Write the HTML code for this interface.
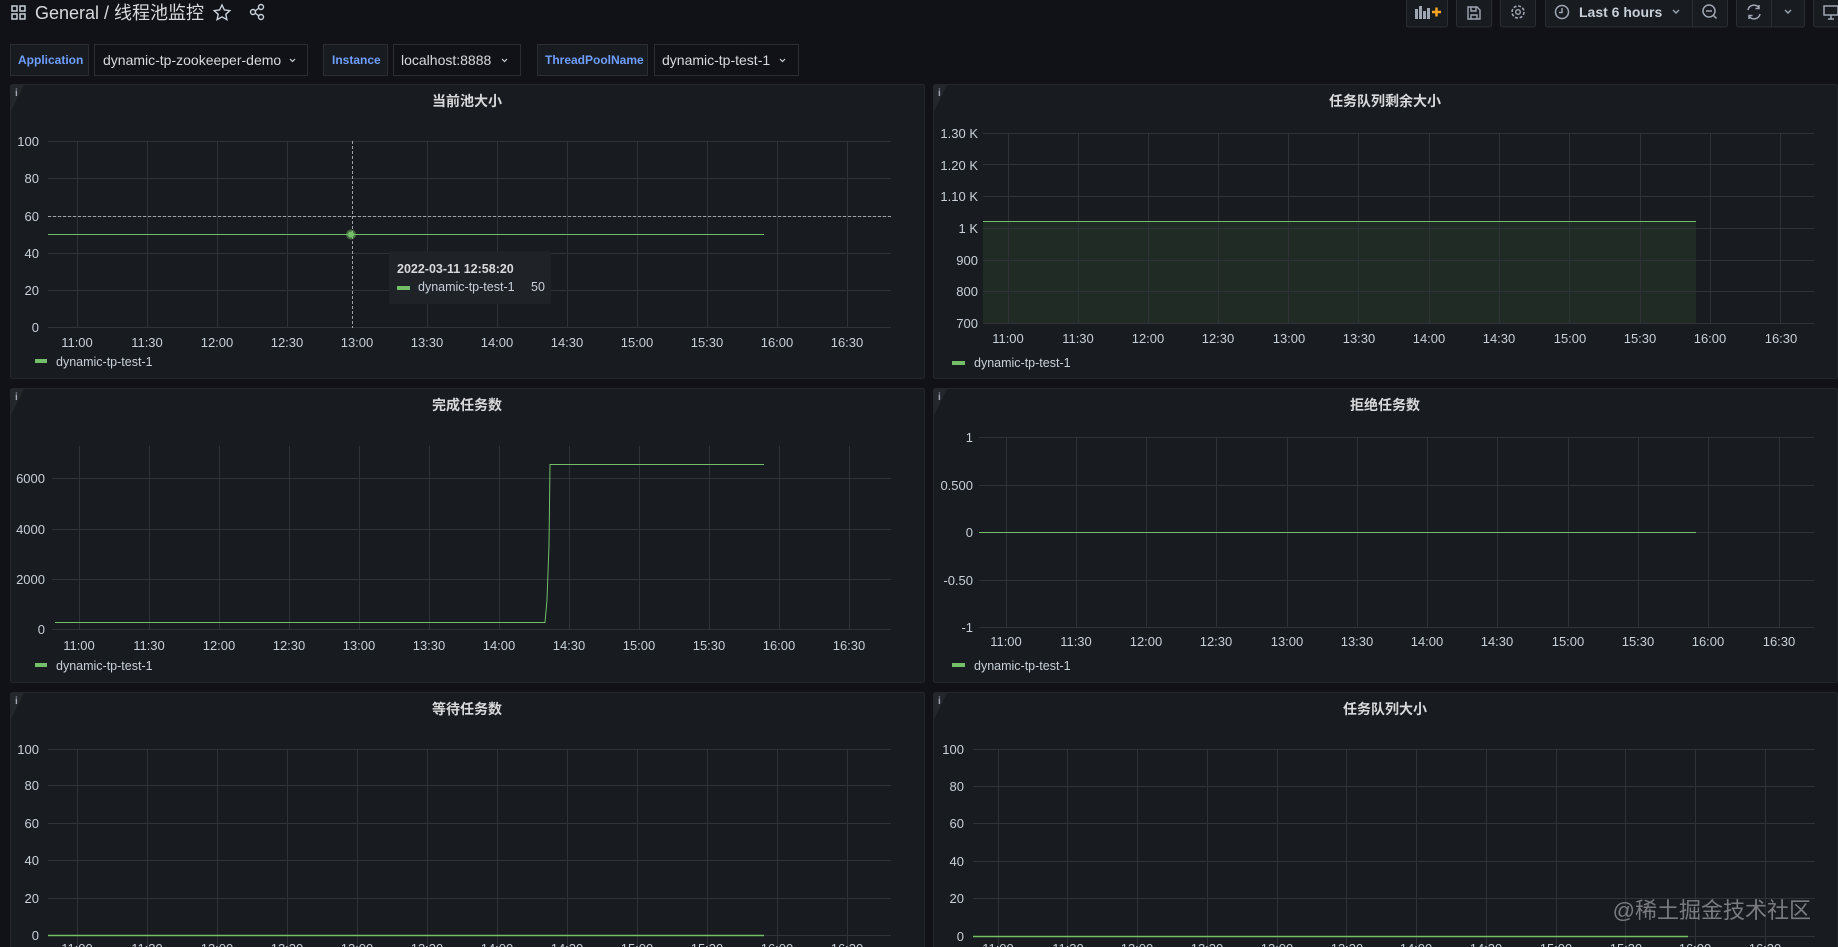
<!DOCTYPE html>
<html><head><meta charset="utf-8"><style>
html,body{margin:0;padding:0;background:#111217;width:1838px;height:947px;overflow:hidden}
svg{display:block}
text{font-family:"Liberation Sans","Noto Sans CJK SC",sans-serif}
.ax{fill:#c7d0d9;font-size:13px}
.tt{fill:#d8d9da;font-size:14px;font-weight:bold;text-anchor:middle}
.g{stroke:#2f3237;stroke-width:1;fill:none}
.lg{fill:#c7d0d9;font-size:12.5px}
.pn{fill:#181b1f;stroke:#23262b}
.btn{fill:#181b1f;stroke:#2a2d33}
</style></head><body>
<svg width="1838" height="947" viewBox="0 0 1838 947" xmlns="http://www.w3.org/2000/svg">
<g fill="none" stroke="#c7d0d9" stroke-width="1.5">
<rect x="12" y="6" width="5" height="5"/><rect x="20" y="6" width="5" height="5"/><rect x="12" y="14" width="5" height="5"/><rect x="20" y="14" width="5" height="5"/>
</g>
<text x="35" y="19" fill="#d8d9da" font-size="18">General</text>
<text x="104" y="19" fill="#d8d9da" font-size="18">/ 线程池监控</text>
<path d="M222 5 l2.4 5 5.4 .6 -4 3.7 1.1 5.3 -4.9-2.7 -4.9 2.7 1.1-5.3 -4-3.7 5.4-.6z" fill="none" stroke="#c7d0d9" stroke-width="1.4"/>
<g fill="none" stroke="#c7d0d9" stroke-width="1.4"><circle cx="253" cy="12" r="2.5"/><circle cx="261" cy="7" r="2.5"/><circle cx="261" cy="17" r="2.5"/><path d="M255 11l4-3M255 13l4 3"/></g>
<rect class="btn" x="1406.5" y="-2" width="41" height="29" rx="2"/>
<g fill="#9fa7b3"><rect x="1415" y="9" width="3" height="10"/><rect x="1419" y="6" width="3" height="13"/><rect x="1423" y="11" width="3" height="8"/><rect x="1427" y="8" width="3" height="11"/></g>
<path d="M1432 12h9M1436.5 7.5v9" stroke="#f5a623" stroke-width="2.5"/>
<rect class="btn" x="1456.5" y="-2" width="35" height="29" rx="2"/>
<path d="M1468 7h9l3 3v9h-12z M1471 7v4h5v-4 M1471 19v-4h6v4" fill="none" stroke="#9fa7b3" stroke-width="1.4"/>
<rect class="btn" x="1500.5" y="-2" width="35" height="29" rx="2"/>
<circle cx="1518" cy="12" r="6" fill="none" stroke="#9fa7b3" stroke-width="1.6" stroke-dasharray="3 1.7"/><circle cx="1518" cy="12" r="2.3" fill="none" stroke="#9fa7b3" stroke-width="1.4"/>
<rect class="btn" x="1545.5" y="-2" width="182" height="29" rx="2"/>
<line x1="1692.5" y1="0" x2="1692.5" y2="27" stroke="#2a2d33"/>
<circle cx="1562" cy="12" r="6.5" fill="none" stroke="#9fa7b3" stroke-width="1.5"/><path d="M1562 8v4.5h-3" fill="none" stroke="#9fa7b3" stroke-width="1.4"/>
<text x="1579" y="17" fill="#c7d0d9" font-size="14" font-weight="bold">Last 6 hours</text>
<path d="M1673 10l3 3 3-3" fill="none" stroke="#9fa7b3" stroke-width="1.4"/>
<circle cx="1709" cy="11" r="6" fill="none" stroke="#9fa7b3" stroke-width="1.5"/><path d="M1706 11h6M1713.5 15.5l3 3" stroke="#9fa7b3" stroke-width="1.5"/>
<rect class="btn" x="1736.5" y="-2" width="68" height="29" rx="2"/>
<line x1="1771.5" y1="0" x2="1771.5" y2="27" stroke="#2a2d33"/>
<path d="M1748 10a6 6 0 0 1 11-2M1760 14a6 6 0 0 1-11 2M1759 5v3.5h-3.5M1749 19v-3.5h3.5" fill="none" stroke="#9fa7b3" stroke-width="1.5"/>
<path d="M1785 10l3 3 3-3" fill="none" stroke="#9fa7b3" stroke-width="1.4"/>
<rect class="btn" x="1813.5" y="-2" width="40" height="29" rx="2"/>
<path d="M1824 6h14v9h-14z M1828 19h6 M1831 15v4" fill="none" stroke="#9fa7b3" stroke-width="1.5"/>

<g font-size="12" font-weight="bold" fill="#6e9fff">
<rect x="10.5" y="44.5" width="78" height="31" fill="#181b1f" stroke="#2a2d33"/><text x="18" y="64">Application</text>
<rect x="323.5" y="44.5" width="64" height="31" fill="#181b1f" stroke="#2a2d33"/><text x="332" y="64">Instance</text>
<rect x="537.5" y="44.5" width="110" height="31" fill="#181b1f" stroke="#2a2d33"/><text x="545" y="64">ThreadPoolName</text>
</g>
<g font-size="14" fill="#d8d9da">
<rect x="94.5" y="44.5" width="213" height="31" fill="#111217" stroke="#2a2d33"/><text x="103" y="65">dynamic-tp-zookeeper-demo</text>
<rect x="393.5" y="44.5" width="127" height="31" fill="#111217" stroke="#2a2d33"/><text x="401" y="65">localhost:8888</text>
<rect x="654.5" y="44.5" width="144" height="31" fill="#111217" stroke="#2a2d33"/><text x="662" y="65">dynamic-tp-test-1</text>
</g>
<g fill="none" stroke="#c7d0d9" stroke-width="1.2"><path d="M290 59l2.5 2.5 2.5-2.5"/><path d="M502 59l2.5 2.5 2.5-2.5"/><path d="M780 59l2.5 2.5 2.5-2.5"/></g>

<rect class="pn" x="10.5" y="84.5" width="914" height="294" rx="2"/>
<rect class="pn" x="933.5" y="84.5" width="904" height="294" rx="2"/>
<rect class="pn" x="10.5" y="388.5" width="914" height="294" rx="2"/>
<rect class="pn" x="933.5" y="388.5" width="904" height="294" rx="2"/>
<rect class="pn" x="10.5" y="692.5" width="914" height="270" rx="2"/>
<rect class="pn" x="933.5" y="692.5" width="904" height="270" rx="2"/>
<g fill="#24272c"><path d="M11 85h13l-13 26z"/><path d="M934 85h13l-13 26z"/><path d="M11 389h13l-13 26z"/><path d="M934 389h13l-13 26z"/><path d="M11 693h13l-13 26z"/><path d="M934 693h13l-13 26z"/></g>
<g fill="#9fa7b3" font-size="10" font-weight="bold" font-family="Liberation Serif"><text x="15" y="96">i</text><text x="938" y="96">i</text><text x="15" y="400">i</text><text x="938" y="400">i</text><text x="15" y="704">i</text><text x="938" y="704">i</text></g>

<text class="tt" x="467" y="106">当前池大小</text>
<text class="tt" x="1385" y="106">任务队列剩余大小</text>
<text class="tt" x="467" y="410">完成任务数</text>
<text class="tt" x="1385" y="410">拒绝任务数</text>
<text class="tt" x="467" y="714">等待任务数</text>
<text class="tt" x="1385" y="714">任务队列大小</text>

<path class="g" d="M48 141.5H891M48 178.5H891M48 216.5H891M48 253.5H891M48 290.5H891M48 327.5H891M77.5 141V328M147.5 141V328M217.5 141V328M287.5 141V328M427.5 141V328M497.5 141V328M567.5 141V328M637.5 141V328M707.5 141V328M777.5 141V328M847.5 141V328"/>
<g class="ax" text-anchor="end"><text x="39" y="146">100</text><text x="39" y="183">80</text><text x="39" y="221">60</text><text x="39" y="258">40</text><text x="39" y="295">20</text><text x="39" y="332">0</text></g>
<g class="ax" text-anchor="middle"><text x="77" y="347">11:00</text><text x="147" y="347">11:30</text><text x="217" y="347">12:00</text><text x="287" y="347">12:30</text><text x="357" y="347">13:00</text><text x="427" y="347">13:30</text><text x="497" y="347">14:00</text><text x="567" y="347">14:30</text><text x="637" y="347">15:00</text><text x="707" y="347">15:30</text><text x="777" y="347">16:00</text><text x="847" y="347">16:30</text></g>
<path d="M48 216.5H891M352.5 141V328" stroke="#a0a4aa" stroke-dasharray="3 2" stroke-width="1"/>
<path d="M48 234.5H764" stroke="#73bf69" stroke-width="1"/>
<circle cx="351" cy="234.5" r="5" fill="#73bf69" opacity=".5"/><circle cx="351" cy="234.5" r="3" fill="#73bf69"/>
<rect x="389" y="251" width="162" height="53" fill="#1f2227" rx="2"/>
<text x="397" y="273" fill="#d8d9da" font-size="12.5" font-weight="bold">2022-03-11 12:58:20</text>
<rect x="397" y="286" width="13" height="4" fill="#73bf69"/>
<text x="418" y="291" fill="#c7d0d9" font-size="12.5">dynamic-tp-test-1</text><text x="531" y="291" fill="#c7d0d9" font-size="12.5">50</text>
<rect x="35" y="359" width="12" height="4" fill="#73bf69"/><text class="lg" x="56" y="366">dynamic-tp-test-1</text>

<rect x="983" y="221" width="713" height="102" fill="#73bf69" opacity=".1"/>
<path class="g" d="M983 133.5H1814M983 164.5H1814M983 196.5H1814M983 228.5H1814M983 260.5H1814M983 291.5H1814M983 323.5H1814M1008.5 133V324M1078.5 133V324M1148.5 133V324M1218.5 133V324M1288.5 133V324M1358.5 133V324M1429.5 133V324M1499.5 133V324M1569.5 133V324M1640.5 133V324M1710.5 133V324M1780.5 133V324"/>
<path d="M983 221.5H1696" stroke="#73bf69"/>
<g class="ax" text-anchor="end"><text x="978" y="138">1.30 K</text><text x="978" y="170">1.20 K</text><text x="978" y="201">1.10 K</text><text x="978" y="233">1 K</text><text x="978" y="265">900</text><text x="978" y="296">800</text><text x="978" y="328">700</text></g>
<g class="ax" text-anchor="middle"><text x="1008" y="343">11:00</text><text x="1078" y="343">11:30</text><text x="1148" y="343">12:00</text><text x="1218" y="343">12:30</text><text x="1289" y="343">13:00</text><text x="1359" y="343">13:30</text><text x="1429" y="343">14:00</text><text x="1499" y="343">14:30</text><text x="1570" y="343">15:00</text><text x="1640" y="343">15:30</text><text x="1710" y="343">16:00</text><text x="1781" y="343">16:30</text></g>
<rect x="952" y="361" width="13" height="4" fill="#73bf69"/><text class="lg" x="974" y="367">dynamic-tp-test-1</text>

<path class="g" d="M52 478.5H891M52 529.5H891M52 579.5H891M52 629.5H891M79.5 446V630M149.5 446V630M219.5 446V630M289.5 446V630M359.5 446V630M429.5 446V630M499.5 446V630M569.5 446V630M639.5 446V630M709.5 446V630M779.5 446V630M849.5 446V630"/>
<g class="ax" text-anchor="end"><text x="45" y="483">6000</text><text x="45" y="534">4000</text><text x="45" y="584">2000</text><text x="45" y="634">0</text></g>
<g class="ax" text-anchor="middle"><text x="79" y="650">11:00</text><text x="149" y="650">11:30</text><text x="219" y="650">12:00</text><text x="289" y="650">12:30</text><text x="359" y="650">13:00</text><text x="429" y="650">13:30</text><text x="499" y="650">14:00</text><text x="569" y="650">14:30</text><text x="639" y="650">15:00</text><text x="709" y="650">15:30</text><text x="779" y="650">16:00</text><text x="849" y="650">16:30</text></g>
<path d="M55 622.5H545L547 600L549 545L550 464.5H764" fill="none" stroke="#73bf69"/>
<rect x="35" y="663" width="12" height="4" fill="#73bf69"/><text class="lg" x="56" y="670">dynamic-tp-test-1</text>

<path class="g" d="M979 437.5H1814M979 485.5H1814M979 532.5H1814M979 580.5H1814M979 627.5H1814M1006.5 437V628M1076.5 437V628M1146.5 437V628M1216.5 437V628M1287.5 437V628M1357.5 437V628M1427.5 437V628M1497.5 437V628M1568.5 437V628M1638.5 437V628M1708.5 437V628M1779.5 437V628"/>
<path d="M979 532.5H1696" stroke="#73bf69"/>
<g class="ax" text-anchor="end"><text x="973" y="442">1</text><text x="973" y="490">0.500</text><text x="973" y="537">0</text><text x="973" y="585">-0.50</text><text x="973" y="632">-1</text></g>
<g class="ax" text-anchor="middle"><text x="1006" y="646">11:00</text><text x="1076" y="646">11:30</text><text x="1146" y="646">12:00</text><text x="1216" y="646">12:30</text><text x="1287" y="646">13:00</text><text x="1357" y="646">13:30</text><text x="1427" y="646">14:00</text><text x="1497" y="646">14:30</text><text x="1568" y="646">15:00</text><text x="1638" y="646">15:30</text><text x="1708" y="646">16:00</text><text x="1779" y="646">16:30</text></g>
<rect x="952" y="663" width="13" height="4" fill="#73bf69"/><text class="lg" x="974" y="670">dynamic-tp-test-1</text>

<path class="g" d="M48 749.5H891M48 785.5H891M48 823.5H891M48 860.5H891M48 898.5H891M48 935.5H891M77.5 749V947M147.5 749V947M217.5 749V947M287.5 749V947M357.5 749V947M427.5 749V947M497.5 749V947M567.5 749V947M637.5 749V947M707.5 749V947M777.5 749V947M847.5 749V947"/>
<path d="M48 935.5H764" stroke="#73bf69" stroke-width="1.5"/>
<g class="ax" text-anchor="end"><text x="39" y="754">100</text><text x="39" y="790">80</text><text x="39" y="828">60</text><text x="39" y="865">40</text><text x="39" y="903">20</text><text x="39" y="940">0</text></g>
<g class="ax" text-anchor="middle"><text x="77" y="953">11:00</text><text x="147" y="953">11:30</text><text x="217" y="953">12:00</text><text x="287" y="953">12:30</text><text x="357" y="953">13:00</text><text x="427" y="953">13:30</text><text x="497" y="953">14:00</text><text x="567" y="953">14:30</text><text x="637" y="953">15:00</text><text x="707" y="953">15:30</text><text x="777" y="953">16:00</text><text x="847" y="953">16:30</text></g>

<path class="g" d="M973 749.5H1815M973 786.5H1815M973 823.5H1815M973 861.5H1815M973 898.5H1815M973 936.5H1815M998.5 749V947M1067.5 749V947M1137.5 749V947M1207.5 749V947M1277.5 749V947M1346.5 749V947M1416.5 749V947M1486.5 749V947M1556.5 749V947M1625.5 749V947M1695.5 749V947M1765.5 749V947"/>
<path d="M973 936.5H1688" stroke="#73bf69" stroke-width="1.5"/>
<g class="ax" text-anchor="end"><text x="964" y="754">100</text><text x="964" y="791">80</text><text x="964" y="828">60</text><text x="964" y="866">40</text><text x="964" y="903">20</text><text x="964" y="941">0</text></g>
<g class="ax" text-anchor="middle"><text x="998" y="953">11:00</text><text x="1068" y="953">11:30</text><text x="1137" y="953">12:00</text><text x="1207" y="953">12:30</text><text x="1277" y="953">13:00</text><text x="1347" y="953">13:30</text><text x="1416" y="953">14:00</text><text x="1486" y="953">14:30</text><text x="1556" y="953">15:00</text><text x="1626" y="953">15:30</text><text x="1695" y="953">16:00</text><text x="1765" y="953">16:30</text></g>
<text x="1811" y="918" text-anchor="end" fill="#9a9ca1" opacity=".75" font-size="22">@稀土掘金技术社区</text>
</svg>
</body></html>
